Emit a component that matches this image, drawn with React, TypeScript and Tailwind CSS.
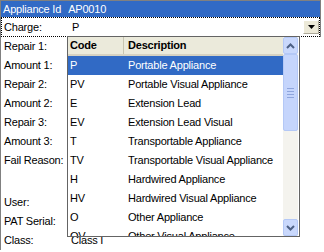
import React from 'react';

const codes = [
  ['P', 'Portable Appliance'],
  ['PV', 'Portable Visual Appliance'],
  ['E', 'Extension Lead'],
  ['EV', 'Extension Lead Visual'],
  ['T', 'Transportable Appliance'],
  ['TV', 'Transportable Visual Appliance'],
  ['H', 'Hardwired Appliance'],
  ['HV', 'Hardwired Visual Appliance'],
  ['O', 'Other Appliance'],
  ['OV', 'Other Visual Appliance'],
];

const rows: [string, string, string][] = [
  ['Repair 1:', '', 'h-[19px]'],
  ['Amount 1:', '', 'h-[19px]'],
  ['Repair 2:', '', 'h-[19px]'],
  ['Amount 2:', '', 'h-[19px]'],
  ['Repair 3:', '', 'h-[19px]'],
  ['Amount 3:', '', 'h-[19px]'],
  ['Fail Reason:', '', 'h-[42px]'],
  ['User:', '', 'h-[19px]'],
  ['PAT Serial:', '', 'h-[19px]'],
  ['Class:', 'Class I', 'h-[19px]'],
];

function ScrollArrow({ up }: { up?: boolean }) {
  return (
    <div className="h-[17px] w-[15px] rounded-[2px] border border-[#b4c8f6] bg-[#c9d8fc] flex items-center justify-center">
      <svg width="9" height="6" viewBox="0 0 9 6">
        <path d={up ? 'M1 5 L4.5 1.5 L8 5' : 'M1 1 L4.5 4.5 L8 1'} stroke="#4d6185" strokeWidth="2" fill="none" />
      </svg>
    </div>
  );
}

export default function App() {
  return (
    <div className="relative w-[324px] h-[252px] overflow-hidden bg-white text-[11px] tracking-[-0.2px] text-black font-['Liberation_Sans',Arial,sans-serif] leading-none">
      <div className="w-[321px] border-t border-r border-l border-[#808080]">
        <div className="h-[16px] bg-[#316ac5] text-white flex items-center pl-[2px]">
          <span>Appliance Id</span>
          <span className="ml-[7px]">AP0010</span>
        </div>
        <div className="h-[20px] border border-dotted border-black flex items-center">
          <span className="w-[70px] pl-[2px]">Charge:</span>
          <span className="flex-1">P</span>
          <div className="h-[14px] w-[16px] bg-[#ece9d8] border border-t-white border-l-white border-b-[#aca899] border-r-[#aca899] flex items-center justify-center">
            <svg width="7" height="4" viewBox="0 0 7 4">
              <path d="M0 0 H7 L3.5 4 Z" fill="#000" />
            </svg>
          </div>
        </div>
      </div>
      <div className="border-l border-[#808080] w-[324px]">
        {rows.map(([label, value, h]) => (
          <div key={label} className={`${h} flex items-start`}>
            <div className="h-[19px] w-[70px] pl-[3px] flex items-center">{label}</div>
            <div className="h-[19px] flex items-center">{value}</div>
          </div>
        ))}
      </div>

      {/* dropdown list */}
      <div className="absolute left-[67px] top-[36px] w-[233px] h-[201px] border border-[#646464] bg-white flex overflow-hidden">
        <div className="flex-1 flex flex-col">
          <div className="h-[19px] shrink-0 flex bg-[#ebeadb] border-b-2 border-[#d6d2c2] font-bold">
            <div className="w-[56px] pl-[2px] flex items-center border-r border-[#c7c5b2]">Code</div>
            <div className="flex-1 pl-[4px] flex items-center">Description</div>
          </div>
          {codes.map(([code, desc], i) => (
            <div
              key={code}
              className={`h-[19px] shrink-0 flex items-center ${i === 0 ? 'bg-[#316ac5] text-white' : ''}`}
            >
              <div className="w-[56px] pl-[2px]">{code}</div>
              <div className="flex-1 pl-[4px] whitespace-nowrap">{desc}</div>
            </div>
          ))}
        </div>
        <div className="w-[15px] shrink-0 bg-[#f4f3ee] flex flex-col">
          <ScrollArrow up />
          <div className="h-[77px] rounded-[2px] border border-[#b4c8f6] bg-[#c5d5fc] flex flex-col items-center justify-center gap-[2px]">
            <div className="w-[7px] h-px bg-[#8ea5dd]" />
            <div className="w-[7px] h-px bg-[#8ea5dd]" />
            <div className="w-[7px] h-px bg-[#8ea5dd]" />
            <div className="w-[7px] h-px bg-[#8ea5dd]" />
          </div>
          <div className="flex-1" />
          <ScrollArrow />
        </div>
        <div className="w-[1px] shrink-0" />
      </div>
    </div>
  );
}
